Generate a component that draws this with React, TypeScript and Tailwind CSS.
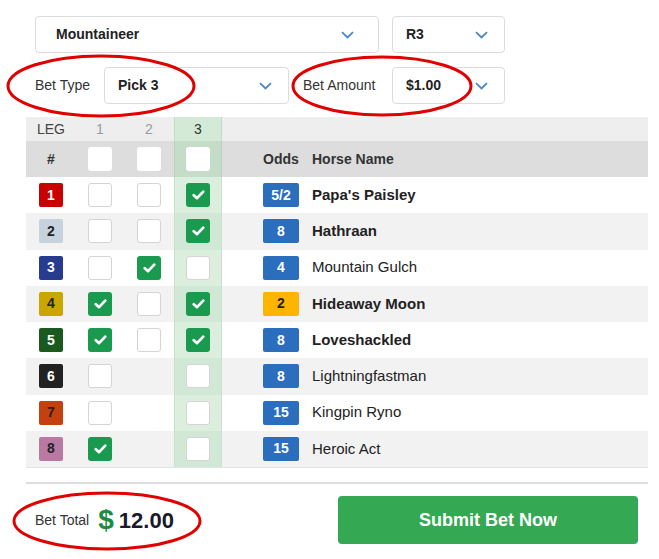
import React from 'react';

interface Horse {
  num: number;
  badge: string;
  odds: string;
  oddsClass: string;
  name: string;
  legs: (boolean | null)[];
}

const horses: Horse[] = [
  { num: 1, badge: 'bg-[#c80000] text-white', odds: '5/2', oddsClass: 'bg-[#2a6ebd] text-white', name: "Papa's Paisley", legs: [false, false, true] },
  { num: 2, badge: 'bg-[#c6d3df] text-[#222]', odds: '8', oddsClass: 'bg-[#2a6ebd] text-white', name: 'Hathraan', legs: [false, false, true] },
  { num: 3, badge: 'bg-[#283c8f] text-white', odds: '4', oddsClass: 'bg-[#2a6ebd] text-white', name: 'Mountain Gulch', legs: [false, true, false] },
  { num: 4, badge: 'bg-[#c9a600] text-[#222]', odds: '2', oddsClass: 'bg-[#ffb400] text-[#222]', name: 'Hideaway Moon', legs: [true, false, true] },
  { num: 5, badge: 'bg-[#1b5a1f] text-white', odds: '8', oddsClass: 'bg-[#2a6ebd] text-white', name: 'Loveshackled', legs: [true, false, true] },
  { num: 6, badge: 'bg-[#222222] text-white', odds: '8', oddsClass: 'bg-[#2a6ebd] text-white', name: 'Lightningfastman', legs: [false, null, false] },
  { num: 7, badge: 'bg-[#c4400f] text-[#222]', odds: '15', oddsClass: 'bg-[#2a6ebd] text-white', name: 'Kingpin Ryno', legs: [false, null, false] },
  { num: 8, badge: 'bg-[#b87aa2] text-[#222]', odds: '15', oddsClass: 'bg-[#2a6ebd] text-white', name: 'Heroic Act', legs: [true, null, false] },
];

const Chevron = () => (
  <svg width="13" height="8" viewBox="0 0 13 8" fill="none">
    <path d="M1 1.2 L6.5 6.5 L12 1.2" stroke="#4a86c8" strokeWidth="1.8" />
  </svg>
);

const Select: React.FC<{ value: string; width: string; pad: string }> = ({ value, width, pad }) => (
  <div className={`${width} ${pad} h-[37px] flex items-center justify-between border border-[#dcdcdc] rounded-[4px] bg-white`}>
    <span className="text-[14px] font-bold text-[#222]">{value}</span>
    <Chevron />
  </div>
);

const Check: React.FC<{ checked: boolean; header?: boolean }> = ({ checked, header }) => {
  if (checked) {
    return (
      <div className="w-[24px] h-[24px] rounded-[3px] bg-[#1a9a4e] flex items-center justify-center">
        <svg width="13" height="10" viewBox="0 0 14 11">
          <path d="M1.8 5.8 L5.4 9 L12.2 1.8" stroke="white" strokeWidth="3" fill="none" strokeLinecap="round" strokeLinejoin="round" />
        </svg>
      </div>
    );
  }
  return <div className={`w-[24px] h-[24px] rounded-[3px] bg-white ${header ? '' : 'border border-[#d4d4d4]'}`} />;
};

export default function App() {
  return (
    <div className="relative w-[659px] h-[559px] bg-white pt-[16px] pl-[26px] font-['Liberation_Sans',Arial,sans-serif] overflow-hidden">
      <div className="ml-[9px] flex gap-[13px]">
        <Select value="Mountaineer" width="w-[344px]" pad="pl-[20px] pr-[24px]" />
        <Select value="R3" width="w-[113px]" pad="pl-[13px] pr-[16px]" />
      </div>
      <div className="ml-[9px] mt-[14px] flex items-center">
        <span className="text-[14px] text-[#333] w-[69px]">Bet Type</span>
        <Select value="Pick 3" width="w-[185px]" pad="pl-[13px] pr-[16px]" />
        <span className="ml-[14px] w-[89px] text-[14px] text-[#333]">Bet Amount</span>
        <Select value="$1.00" width="w-[113px]" pad="pl-[13px] pr-[16px]" />
      </div>

      <div className="mt-[13px] w-[622px]">
        <div className="flex h-[24px] items-center bg-[#eeeeee] text-[14px]">
          <div className="w-[50px] text-center text-[#444]">LEG</div>
          <div className="w-[48px] text-center text-[#9a9a9a]">1</div>
          <div className="w-[50px] text-center text-[#9a9a9a]">2</div>
          <div className="w-[48px] h-full flex items-center justify-center text-[#333] bg-[#d3ead7] border-x border-[#c3dcc7]">3</div>
        </div>
        <div className="flex h-[36px] items-center bg-[#dddddd] text-[14px] font-bold text-[#333]">
          <div className="w-[50px] text-center">#</div>
          <div className="w-[48px] flex justify-center"><Check checked={false} header /></div>
          <div className="w-[50px] flex justify-center"><Check checked={false} header /></div>
          <div className="w-[48px] h-full flex items-center justify-center bg-[#c5dcc9] border-x border-[#b8d2bd]"><Check checked={false} header /></div>
          <div className="w-[90px] pl-[41px]">Odds</div>
          <div>Horse Name</div>
        </div>
        {horses.map((h, i) => {
          const bold = h.legs[2];
          const even = i % 2 === 1;
          return (
            <div key={h.num} className={`flex h-[36.25px] items-center ${even ? 'bg-[#f2f2f2]' : 'bg-white'}`}>
              <div className="w-[50px] flex justify-center">
                <div className={`w-[24px] h-[24px] rounded-[2px] flex items-center justify-center text-[14px] font-bold ${h.badge}`}>{h.num}</div>
              </div>
              <div className="w-[48px] flex justify-center">{h.legs[0] !== null && <Check checked={!!h.legs[0]} />}</div>
              <div className="w-[50px] flex justify-center">{h.legs[1] !== null && <Check checked={!!h.legs[1]} />}</div>
              <div className={`w-[48px] h-full flex items-center justify-center border-x border-[#c8e0cc] ${even ? 'bg-[#d2e8d6]' : 'bg-[#dcefdf]'}`}>
                <Check checked={!!h.legs[2]} />
              </div>
              <div className="w-[90px] pl-[41px]">
                <div className={`w-[36px] h-[24px] rounded-[2px] flex items-center justify-center text-[14px] font-bold ${h.oddsClass}`}>{h.odds}</div>
              </div>
              <div className={`text-[15px] text-[#222] ${bold ? 'font-bold' : ''}`}>{h.name}</div>
            </div>
          );
        })}
        <div className="h-[1px] bg-[#e4e4e4]" />
      </div>

      <div className="mt-[14px] w-[622px] h-[2px] bg-[#dddddd]" />

      <div className="mt-[12px] flex items-center">
        <div className="ml-[9px] flex items-center w-[303px]">
          <span className="text-[14px] text-[#333]">Bet Total</span>
          <span className="ml-[9px] text-[28px] font-bold leading-none text-[#1e8c45]">$</span>
          <span className="ml-[5px] text-[22px] font-bold text-[#1a1a2a]">12.00</span>
        </div>
        <button className="w-[300px] h-[48px] rounded-[4px] bg-[#34a853] text-white text-[18px] font-bold">Submit Bet Now</button>
      </div>

      <svg className="absolute left-0 top-0 pointer-events-none" width="659" height="559">
        <ellipse cx="101" cy="86" rx="93" ry="30" fill="none" stroke="#e00000" strokeWidth="3" />
        <ellipse cx="382" cy="86" rx="89" ry="29" fill="none" stroke="#e00000" strokeWidth="3" />
        <ellipse cx="107" cy="521" rx="93" ry="28" fill="none" stroke="#e00000" strokeWidth="3" />
      </svg>
    </div>
  );
}
